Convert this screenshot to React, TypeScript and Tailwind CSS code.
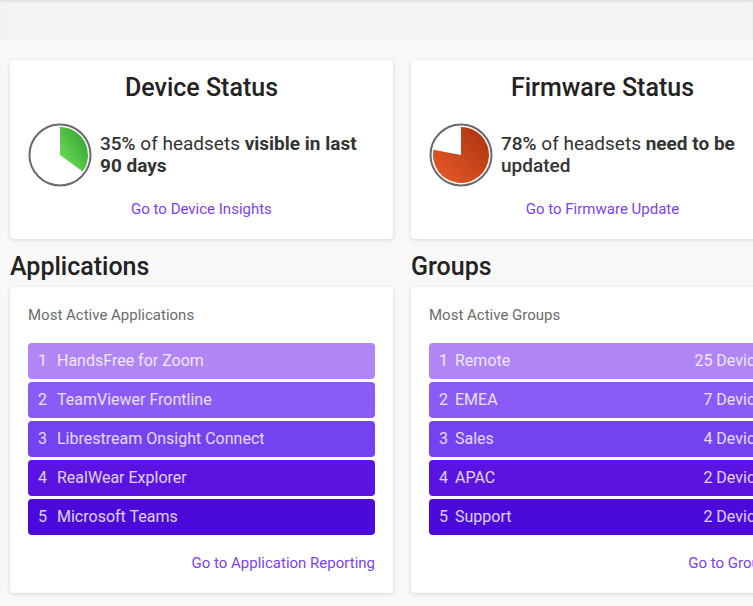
const APPS = [
  "HandsFree for Zoom",
  "TeamViewer Frontline",
  "Librestream Onsight Connect",
  "RealWear Explorer",
  "Microsoft Teams",
];

const GROUPS = [
  { name: "Remote", count: 25 },
  { name: "EMEA", count: 7 },
  { name: "Sales", count: 4 },
  { name: "APAC", count: 2 },
  { name: "Support", count: 2 },
];

// one shade per rank, lightest first
const ROW_COLORS = ["bg-[#b185f3]", "bg-[#8b5cf5]", "bg-[#7442ee]", "bg-[#5a13e0]", "bg-[#4b0ada]"];

function Pie({ percent, from, to, id }: { percent: number; from: string; to: string; id: string }) {
  const r = 28;
  const a = (percent / 100) * Math.PI * 2;
  const x = 32 + r * Math.sin(a);
  const y = 32 - r * Math.cos(a);
  const large = percent > 50 ? 1 : 0;
  return (
    <svg width="64" height="64" viewBox="0 0 64 64" className="shrink-0">
      <defs>
        <linearGradient id={id} x1="1" y1="0" x2="0" y2="1">
          <stop offset="0" stopColor={from} />
          <stop offset="1" stopColor={to} />
        </linearGradient>
      </defs>
      <circle cx="32" cy="32" r="30.5" fill="#fff" stroke="#6a6a6a" strokeWidth="2" />
      <path d={`M32 32 L32 ${32 - r} A${r} ${r} 0 ${large} 1 ${x} ${y} Z`} fill={`url(#${id})`} />
    </svg>
  );
}

function StatusCard({
  title,
  pie,
  lead,
  rest,
  link,
}: {
  title: string;
  pie: React.ReactNode;
  lead: string;
  rest: React.ReactNode;
  link: string;
}) {
  return (
    <div className="flex h-[179px] w-[383px] flex-col rounded bg-white px-[18px] pt-[14px] shadow-[0_1px_4px_rgba(0,0,0,0.14)]">
      <h2 className="text-center text-[25px] font-medium leading-[28px] text-[#222]">{title}</h2>
      <div className="mt-[21px] flex items-center gap-[8px]">
        {pie}
        <p className="text-[19px] leading-[22px] text-[#333]">
          <span className="font-medium">{lead}</span> of headsets <span className="font-bold">{rest}</span>
        </p>
      </div>
      <a className="mt-[12px] text-center text-[15px] leading-[20px] text-[#7b3ff2]">{link}</a>
    </div>
  );
}

function ListCard({
  subtitle,
  rows,
  link,
}: {
  subtitle: string;
  rows: { name: string; right?: string }[];
  link: string;
}) {
  return (
    <div className="flex w-[383px] flex-col rounded bg-white px-[18px] pb-[20px] pt-[18px] shadow-[0_1px_4px_rgba(0,0,0,0.14)]">
      <p className="text-[15px] leading-[20px] text-[#6b6b6b]">{subtitle}</p>
      <div className="mt-[18px] flex flex-col gap-[3px]">
        {rows.map((row, i) => (
          <div
            key={row.name}
            className={`flex h-9 items-center rounded-sm pl-[10px] pr-[4px] text-[16px] text-white/80 ${ROW_COLORS[i]}`}
          >
            <span className={row.right ? "w-[16px]" : "w-[19px]"}>{i + 1}</span>
            <span className="flex-1">{row.name}</span>
            {row.right && <span>{row.right}</span>}
          </div>
        ))}
      </div>
      <a className="mt-[18px] self-end text-[15px] leading-[20px] text-[#7b3ff2]">{link}</a>
    </div>
  );
}

export default function App() {
  return (
    <div className="h-[606px] w-[753px] overflow-hidden bg-[#f8f8f8] font-['Roboto',sans-serif]">
      <div className="h-10 bg-[#f3f3f3] shadow-[inset_0_2px_2px_rgba(0,0,0,0.06)]" />
      <div className="w-[820px] px-[10px] pt-5">
        <div className="flex gap-[18px]">
          <StatusCard
            title="Device Status"
            pie={<Pie percent={35} from="#2f9a2f" to="#74e65c" id="g1" />}
            lead="35%"
            rest={
              <>
                visible in last
                <br />
                90 days
              </>
            }
            link="Go to Device Insights"
          />
          <StatusCard
            title="Firmware Status"
            pie={<Pie percent={78} from="#a8320f" to="#ec5c2a" id="g2" />}
            lead="78%"
            rest={
              <>
                need to be
                <br />
                <span className="font-medium">updated</span>
              </>
            }
            link="Go to Firmware Update"
          />
        </div>
        <div className="mt-[14px] flex gap-[18px]">
          <div className="flex flex-col">
            <h2 className="text-[25px] font-medium leading-[28px] text-[#222]">Applications</h2>
            <div className="mt-[6px]">
              <ListCard
                subtitle="Most Active Applications"
                rows={APPS.map((name) => ({ name }))}
                link="Go to Application Reporting"
              />
            </div>
          </div>
          <div className="flex flex-col">
            <h2 className="text-[25px] font-medium leading-[28px] text-[#222]">Groups</h2>
            <div className="mt-[6px]">
              <ListCard
                subtitle="Most Active Groups"
                rows={GROUPS.map((g) => ({ name: g.name, right: `${g.count} Devices` }))}
                link="Go to Groups"
              />
            </div>
          </div>
        </div>
      </div>
    </div>
  );
}
